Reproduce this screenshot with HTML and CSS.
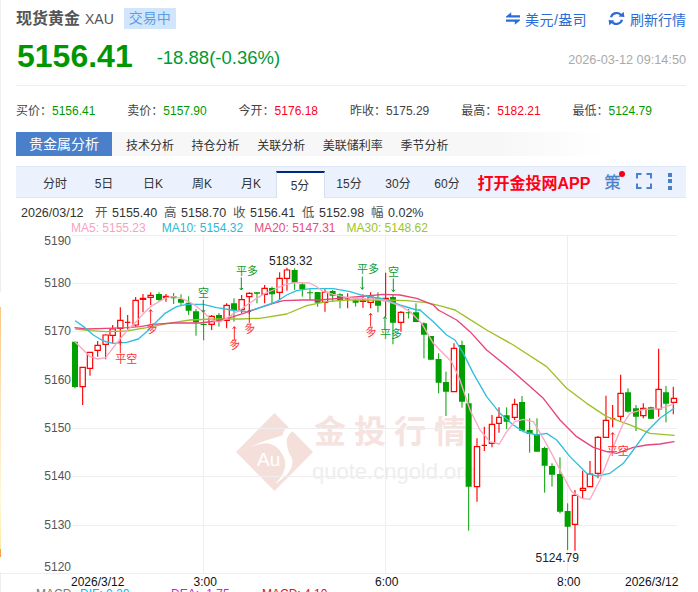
FILE: index.html
```html
<!DOCTYPE html>
<html lang="zh">
<head>
<meta charset="utf-8">
<title>现货黄金 XAU</title>
<link rel="stylesheet" href="styles.css">
</head>
<body>
<div class="page">
  <header class="top">
    <div class="title-row">
      <h1 class="name">现货黄金</h1>
      <span class="code">XAU</span>
      <span class="badge">交易中</span>
      <div class="actions">
        <a class="action action-usd">
          <svg class="ico-swap" viewBox="0 0 14 13" width="14" height="13"><path d="M0 4.6 5.2 .2V3.2H14V5.6H0ZM14 8.4 8.8 12.8V9.8H0V7.4H14Z"/></svg>
          美元/盎司
        </a>
        <a class="action action-refresh">
          <svg class="ico-refresh" viewBox="0 0 17 15" width="17" height="15"><path class="arc" d="M3 6.2A5.8 5.8 0 0 1 13.4 4.6M14 8.8A5.8 5.8 0 0 1 3.6 10.4"/><path class="head" d="M10.6 5.4 16.4 6 15.6 .8ZM6.4 9.6 .6 9 1.4 14.2Z"/></svg>
          刷新行情
        </a>
      </div>
    </div>
    <div class="price-row">
      <span class="price">5156.41</span>
      <span class="change">-18.88(-0.36%)</span>
      <span class="time">2026-03-12 09:14:50</span>
    </div>
    <ul class="stats">
      <li>买价：<b class="down">5156.41</b></li>
      <li>卖价：<b class="down">5157.90</b></li>
      <li>今开：<b class="up">5176.18</b></li>
      <li>昨收：<b class="flat">5175.29</b></li>
      <li>最高：<b class="up">5182.21</b></li>
      <li>最低：<b class="down">5124.79</b></li>
    </ul>
    <nav class="tabs">
      <a class="tab tab-active">贵金属分析</a>
      <a class="tab">技术分析</a>
      <a class="tab">持仓分析</a>
      <a class="tab">关联分析</a>
      <a class="tab">美联储利率</a>
      <a class="tab">季节分析</a>
    </nav>
    <div class="periods">
      <a class="period">分时</a>
      <a class="period">5日</a>
      <a class="period">日K</a>
      <a class="period">周K</a>
      <a class="period">月K</a>
      <a class="period period-active">5分</a>
      <a class="period">15分</a>
      <a class="period">30分</a>
      <a class="period">60分</a>
      <a class="app-link">打开金投网APP</a>
      <span class="strategy">策<i class="dot"></i></span>
      <svg class="ico-full" viewBox="0 0 16 16" width="16" height="16"><path d="M5.5 1H1V5.5M10.5 1H15V5.5M5.5 15H1V10.5M10.5 15H15V10.5"/></svg>
      <span class="more"><i></i><i></i><i></i></span>
    </div>
    <div class="ohlc">
      <span class="o-date">2026/03/12</span>
      <span class="o-item"><em>开</em>5155.40</span>
      <span class="o-item"><em>高</em>5158.70</span>
      <span class="o-item"><em>收</em>5156.41</span>
      <span class="o-item"><em>低</em>5152.98</span>
      <span class="o-item"><em>幅</em>0.02%</span>
    </div>
    <div class="ma-row">
      <span class="ma5">MA5: 5155.23</span>
      <span class="ma10">MA10: 5154.32</span>
      <span class="ma20">MA20: 5147.31</span>
      <span class="ma30">MA30: 5148.62</span>
    </div>
  </header>

  <svg class="chart" viewBox="0 232 698 360" width="698" height="360">
    <defs>
      <linearGradient id="edge" x1="0" y1="0" x2="0" y2="1">
        <stop offset="0" stop-color="#fbc680"/>
        <stop offset=".35" stop-color="#fde0b8"/>
        <stop offset=".8" stop-color="#fff8d8"/>
        <stop offset="1" stop-color="#fdeaa0"/>
      </linearGradient>
    </defs>
    <rect class="edge-grey" x="0" y="232" width="1" height="60"/>
    <rect x="0" y="307" width="1" height="243" fill="url(#edge)"/>
    <rect class="edge-orange" x="0" y="549" width="1" height="8"/>
    <rect class="edge-grey" x="0" y="572" width="1" height="20"/>

    <!-- watermark -->
    <g class="wm">
      <path class="wm-diamond" d="M274.5 413 313 452 274.5 491 236 452Z"/>
      <path class="wm-swoosh" transform="translate(0 400) scale(.3333)" d="M708 158Q780 125 848 106Q850 86 868 82L884 92Q866 96 860 120Q860 150 876 175Q886 215 825 252Q872 205 848 165Q832 132 800 130Q750 134 708 158Z"/>
      <text class="wm-au" x="257" y="466">Au</text>
      <text class="wm-cn" x="314" y="443">金投行情</text>
      <text class="wm-en" x="312" y="479">quote.cngold.org</text>
    </g>

    <!-- grid -->
    <path class="grid" d="M72 235.5H677M72 283.5H677M72 331.5H677M72 379.5H677M72 428.5H677M72 476.5H677M72 525.5H677M0 573.5H677M203.5 235V573M385.5 235V573M567.5 235V573"/>

    <!-- y axis -->
    <g class="y-axis">
      <text x="71" y="245">5190</text>
      <text x="71" y="287">5180</text>
      <text x="71" y="335">5170</text>
      <text x="71" y="384">5160</text>
      <text x="71" y="432">5150</text>
      <text x="71" y="480">5140</text>
      <text x="71" y="529">5130</text>
      <text x="71" y="571">5120</text>
    </g>

    <!-- candles, drawn in 3x units -->
    <g transform="translate(40 235) scale(.3333)">
      <path class="wick-g" d="M105 320V460M357 172V200M401 174V207M423 178V210M446 184V240M468 222V302M491 225V316M537 234V275M582 190V260M651 172V205M696 155V205M764 100V165M787 143V185M810 163V195M833 171V215M878 165V200M900 175V220M947 190V215M1014 172V232M1059 178V328M1106 222V250M1128 205V262M1152 262V370M1173 303V375M1196 355V475M1218 410V543"/>
      <path class="body-g" d="M105 320V456M357 177V195M401 184V190M423 192V203M446 203V227M468 229V262M491 267V270M537 240V260M582 205V226M651 172V176M696 159V178M764 105V143M787 148V163M810 172V175M833 171V203M878 168V182M900 178V195M947 195V203M1014 188V212M1059 186V263M1106 232V235M1128 232V261M1152 265V299M1173 303V374M1196 372V443M1218 441V470"/>
      <path class="wick-r" d="M128 397V510M150 352V422M173 318V365M197 298V373M218 270V325M241 217V330M263 240V285M287 186V275M309 177V232M332 172V210M378 177V200M515 240V285M560 205V280M605 180V235M628 172V238M674 150V205M719 112V195M741 98V167M855 163V230M923 175V220M969 178V218M992 172V220M1037 113V245M1083 228V290"/>
      <path class="body-r" d="M120 397H136V455H120ZM142 352H158V400H142ZM165 331H181V346H165ZM189 300H205V328H189ZM210 282H226V301H210ZM233 256H249V280H233ZM255 262H271M279 196H295V270H279ZM301 190H317V193H301ZM324 181H340V187H324ZM370 184H386V187H370ZM507 244H523V268H507ZM552 211H568V256H552ZM597 194H613V224H597ZM620 175H636V185H620ZM666 160H682V178H666ZM711 130H727V172H711ZM733 105H749V130H733ZM847 172H863V202H847ZM915 192H931M961 197H977V199H961ZM984 186H1000V202H984ZM1029 190H1045V197H1029ZM1075 232H1091V262H1075Z"/>
    </g>
    <g transform="translate(400 310) scale(.3333)">
      <path class="wick-g" d="M186 92V293M206 250V662M366 258V362M389 325V428M411 325V425M434 410V548M456 460V530M480 442V610M503 580V720M684 235V308M708 285V363M753 290V327M798 228V337"/>
      <path class="body-g" d="M186 105V275M206 280V530M366 276V362M389 360V372M411 372V425M434 414V467M456 468V494M480 492V605M503 603V650M684 247V305M708 295V320M753 292V326M798 247V281M320 316V335"/>
      <path class="wick-g" d="M320 292V357"/>
      <path class="wick-r" d="M162 100V245M231 385V575M253 350V423M276 315V412M297 292V368M344 266V330M525 540V722M548 482V567M570 453V530M594 378V505M618 257V383M638 285V352M662 194V332M730 280V325M776 116V320M820 230V313"/>
      <path class="body-r" d="M154 115H170V245H154ZM223 410H239V530H223ZM245 406H261M268 343H284V400H268ZM290 322H304V340H290ZM337 283H352V322H337ZM517 556H533V643H517ZM541 535H557V541H541ZM562 492H578V530H562ZM586 382H602V490H586ZM610 331H626V382H610ZM630 326H646M654 250H670V319H654ZM722 295H738V317H722ZM768 238H784V297H768ZM814 265H830V277H814Z"/>
    </g>

    <!-- moving averages -->
    <g transform="translate(40 235) scale(.3333)" class="ma-lines">
      <path class="l30" d="M107 282 150 287 200 290 260 288 320 278 380 266 450 255 520 252 600 252 660 250 740 237 800 212 860 200 920 195 1040 195 1100 197 1160 203 1210 215 1245 225"/>
      <path class="l20" d="M105 278 140 282 200 280 260 278 300 275 340 268 400 264 480 264 530 258 580 245 620 232 660 218 700 205 730 197 790 195 840 195 920 188 980 183 1030 178 1080 180 1130 190 1180 210 1195 225"/>
      <path class="l10" d="M107 258 135 278 160 300 190 318 220 325 260 322 295 312 320 290 345 265 375 235 410 215 440 208 490 208 530 218 575 225 620 230 660 218 710 200 740 180 770 167 810 161 880 161 930 170 970 182 1030 192 1080 210 1130 225 1140 225"/>
      <path class="l5" d="M105 320 130 345 150 365 173 372 197 368 218 340 241 310 263 285 287 262 309 237 332 215 357 200 378 188 401 185 423 190 446 200 468 213 491 232 515 255 537 262 560 250 582 235 605 222 628 205 650 190 675 175 700 165 720 155 740 148 765 143 808 144 830 155 850 170 880 178 910 185 940 190 970 190 1000 192 1030 195 1060 205 1085 215 1110 230"/>
    </g>
    <g transform="translate(400 310) scale(.3333)" class="ma-lines">
      <path class="l30" d="M165 0 200 22 260 60 340 105 440 170 500 235 560 280 620 320 690 345 750 370 822 376"/>
      <path class="l20" d="M115 0 170 30 210 65 260 120 340 185 430 265 480 330 530 380 580 412 620 425 650 430 700 412 740 405 780 402 822 395"/>
      <path class="l10" d="M60 0 100 35 140 75 165 90 190 130 220 190 260 260 300 310 340 345 370 365 410 375 440 370 470 390 510 440 560 490 590 498 630 490 670 460 700 420 740 365 780 325 822 295"/>
      <path class="l5" d="M30 5 65 40 100 100 125 125 155 155 180 210 210 300 240 360 270 395 298 402 320 365 345 335 370 328 400 335 430 385 460 440 490 500 515 545 545 565 570 568 600 510 640 410 670 340 690 310 730 298 780 296 822 282"/>
    </g>

    <!-- trade marks -->
    <g transform="translate(40 235) scale(.3333)" class="marks">
      <path class="arrow-r" d="M241 355V318M236 324 241 318 246 324M332 265V224M327 230 332 224 337 230M583 315V275M578 281 583 275 588 281M628 265V225M623 231 628 225 633 231M992 275V235M987 241 992 235 997 241"/>
      <path class="arrow-g" d="M490 195V232M485 226 490 232 495 226M604 127V165M599 159 604 165 609 159M967 125V163M962 157 967 163 972 157M1060 130V170M1055 164 1060 170 1065 164M1035 285V245M1030 251 1035 245 1040 251"/>
      <text class="m-r" x="226" y="384">平空</text>
      <text class="m-g" x="474" y="187">空</text>
      <text class="m-g" x="588" y="119">平多</text>
      <text class="m-g" x="951" y="115">平多</text>
      <text class="m-g" x="1044" y="122">空</text>
      <text class="m-g" x="1020" y="309">平多</text>
      <text class="m-r" transform="rotate(-18 335 280)" x="320" y="292">多</text>
      <text class="m-r" transform="rotate(-18 583 328)" x="568" y="340">多</text>
      <text class="m-r" transform="rotate(-18 628 280)" x="613" y="292">多</text>
      <text class="m-r" transform="rotate(-18 992 290)" x="977" y="302">多</text>
    </g>
    <g transform="translate(400 310) scale(.3333)" class="marks">
      <path class="arrow-r" d="M638 410V368M633 374 638 368 643 374"/>
      <text class="m-r" x="620" y="434">平空</text>
    </g>

    <text class="extreme" x="269" y="265">5183.32</text>
    <text class="extreme" x="535.5" y="562">5124.79</text>

    <g class="x-axis">
      <text x="71" y="586">2026/3/12</text>
      <text x="193.500" y="586">3:00</text>
      <text x="375" y="586">6:00</text>
      <text x="557" y="586">8:00</text>
      <text x="625" y="586">2026/3/12</text>
    </g>

    <g class="macd">
      <text class="m-name" x="36" y="598">MACD</text>
      <text class="m-dif" x="80" y="598">DIF: 0.20</text>
      <text class="m-dea" x="171" y="598">DEA: -1.75</text>
      <text class="m-val" x="262" y="598">MACD: 4.10</text>
    </g>
  </svg>
</div>
</body>
</html>
```

FILE: styles.css
```css
* { box-sizing: border-box; margin: 0; padding: 0; }
html, body { height: 592px; overflow: hidden; background: #fff; }
body { font-family: "Liberation Sans", "Noto Sans CJK SC", sans-serif; color: #333; }
.page { width: 698px; height: 592px; overflow: hidden; }
a { color: inherit; text-decoration: none; }
em, i { font-style: normal; }

.top { height: 232px; margin-right: 12px; padding-top: 8px; padding-left: 15px; border-left: 1px solid #f0f0f0; }

.title-row { display: flex; align-items: center; height: 21px; }
.name { font-size: 16px; font-weight: 700; color: #555; line-height: 21px; }
.code { font-size: 14px; color: #555; margin-left: 5px; }
.badge { margin-left: 10px; width: 52px; height: 21px; line-height: 21px; text-align: center; font-size: 14px; color: #5b9ee8; background: #d2e6fb; }
.actions { margin-left: auto; display: flex; align-items: center; font-size: 14px; color: #2b6bd6; }
.action { display: flex; align-items: center; gap: 5px; }
.action-usd { letter-spacing: .4px; }
.action-refresh { margin-left: 21px; }
.ico-swap { fill: #2b6bd6; }
.ico-refresh .arc { fill: none; stroke: #2b6bd6; stroke-width: 2.2; }
.ico-refresh .head { fill: #2b6bd6; }

.price-row { display: flex; align-items: flex-start; height: 57px; padding-top: 9px; border-bottom: 1px solid #eee; }
.price { font-size: 32px; font-weight: 700; color: #009600; line-height: 37px; margin-left: 1px; }
.change { font-size: 18.5px; line-height: 20px; color: #009933; margin-left: 24px; margin-top: 10px; }
.time { margin-left: auto; font-size: 12.7px; line-height: 14px; color: #aaa; margin-top: 15px; }

.stats { display: flex; list-style: none; height: 46px; align-items: center; font-size: 12px; color: #444; }
.stats li { width: 111.3px; white-space: nowrap; }
.stats b { font-weight: 400; }
.down { color: #009a00; }
.up { color: #ff0022; }
.flat { color: #444; }

.tabs { display: flex; height: 24px; align-items: center; background: linear-gradient(90deg, #f7f7f7 0, #f7f7f7 72%, #fff 88%); font-size: 12px; color: #333; }
.tab { margin-right: 17.6px; white-space: nowrap; }
.tab-active { width: 96px; height: 24px; line-height: 24px; text-align: center; margin-right: 14px; background: #4a7fc9; color: #fff; font-size: 14px; }

.periods { display: flex; align-items: center; height: 32px; margin-top: 10px; padding-left: 14.5px; background: #ebf2fd; border-top: 1px solid #dfe7f4; border-bottom: 1px solid #dfe7f4; font-size: 12px; color: #333; }
.period { width: 49px; height: 26px; margin-top: 4px; line-height: 26px; text-align: center; }
.period-active { background: #fff; border-top: 2px solid #00297a; border-left: 1px solid #d5dff0; border-right: 1px solid #d5dff0; height: 27px; margin-top: 5px; line-height: 26px; }
.app-link { margin-left: 6px; font-size: 16px; font-weight: 700; color: #ff0018; white-space: nowrap; width: 113px; }
.strategy { margin-left: 14px; margin-top: -3px; font-size: 16px; color: #4a7fc9; position: relative; -webkit-text-stroke: .3px #4a7fc9; }
.dot { position: absolute; top: 2px; right: -4px; width: 6px; height: 6px; border-radius: 50%; background: #f00018; }
.ico-full { margin-left: 15px; margin-top: -3px; fill: none; stroke: #4a7fc9; stroke-width: 2; }
.more { display: flex; flex-direction: column; gap: 2.5px; margin-left: 16px; margin-top: -2px; }
.more i { width: 4px; height: 4px; background: #4a7fc9; display: block; }

.ohlc { display: flex; font-size: 12.5px; color: #333; margin-top: 8px; margin-left: 5px; height: 15px; line-height: 15px; white-space: nowrap; }
.o-date { width: 74px; }
.o-item { width: 69px; }
.o-item em { display: inline-block; width: 17px; color: #555; }
.ma-row { display: flex; gap: 11px; font-size: 12px; height: 14px; line-height: 14px; margin-left: 55px; white-space: nowrap; }
.ma5 { color: #f9a2bf; margin-right: 5px; }
.ma10 { color: #2bb9d9; }
.ma20 { color: #ea4a80; }
.ma30 { color: #9fc425; }

.chart { display: block; font-family: "Liberation Sans", "Noto Sans CJK SC", sans-serif; }
.edge-grey { fill: #eee; }
.edge-orange { fill: #f9a050; }
.wm-diamond { fill: #f5dfdb; }
.wm-swoosh { fill: #fff; }
.wm-au { fill: #fff; font-size: 19px; }
.wm-cn { fill: #f6e2de; font-size: 32px; font-weight: 700; letter-spacing: 8px; }
.wm-en { fill: #eeeeee; font-size: 22px; }
.grid { fill: none; stroke: #eee; stroke-width: 1; }
.y-axis text { text-anchor: end; font-size: 12px; fill: #555; }
.wick-g { fill: none; stroke: #00a000; stroke-width: 3; }
.body-g { fill: none; stroke: #00a000; stroke-width: 18; }
.wick-r { fill: none; stroke: #ff0000; stroke-width: 3.4; }
.body-r { fill: #fff; stroke: #ff0000; stroke-width: 3.6; }
.ma-lines path { fill: none; stroke-width: 4; stroke-linejoin: round; stroke-linecap: round; }
.l5 { stroke: #f9a8c2; }
.l10 { stroke: #2fbfdc; }
.l20 { stroke: #e9437c; }
.l30 { stroke: #9fc025; }
.arrow-r { fill: none; stroke: #ff2020; stroke-width: 3; }
.arrow-g { fill: none; stroke: #009a20; stroke-width: 3; }
.marks text { font-size: 33px; }
.m-r { fill: #ff3030; }
.m-g { fill: #109a30; }
.extreme { font-size: 12px; fill: #222; }
.x-axis text { font-size: 12px; fill: #111; }
.macd text { font-size: 12px; }
.m-name { fill: #777; }
.m-dif { fill: #00b7f0; }
.m-dea { fill: #d020d0; }
.m-val { fill: #d01818; }
```
